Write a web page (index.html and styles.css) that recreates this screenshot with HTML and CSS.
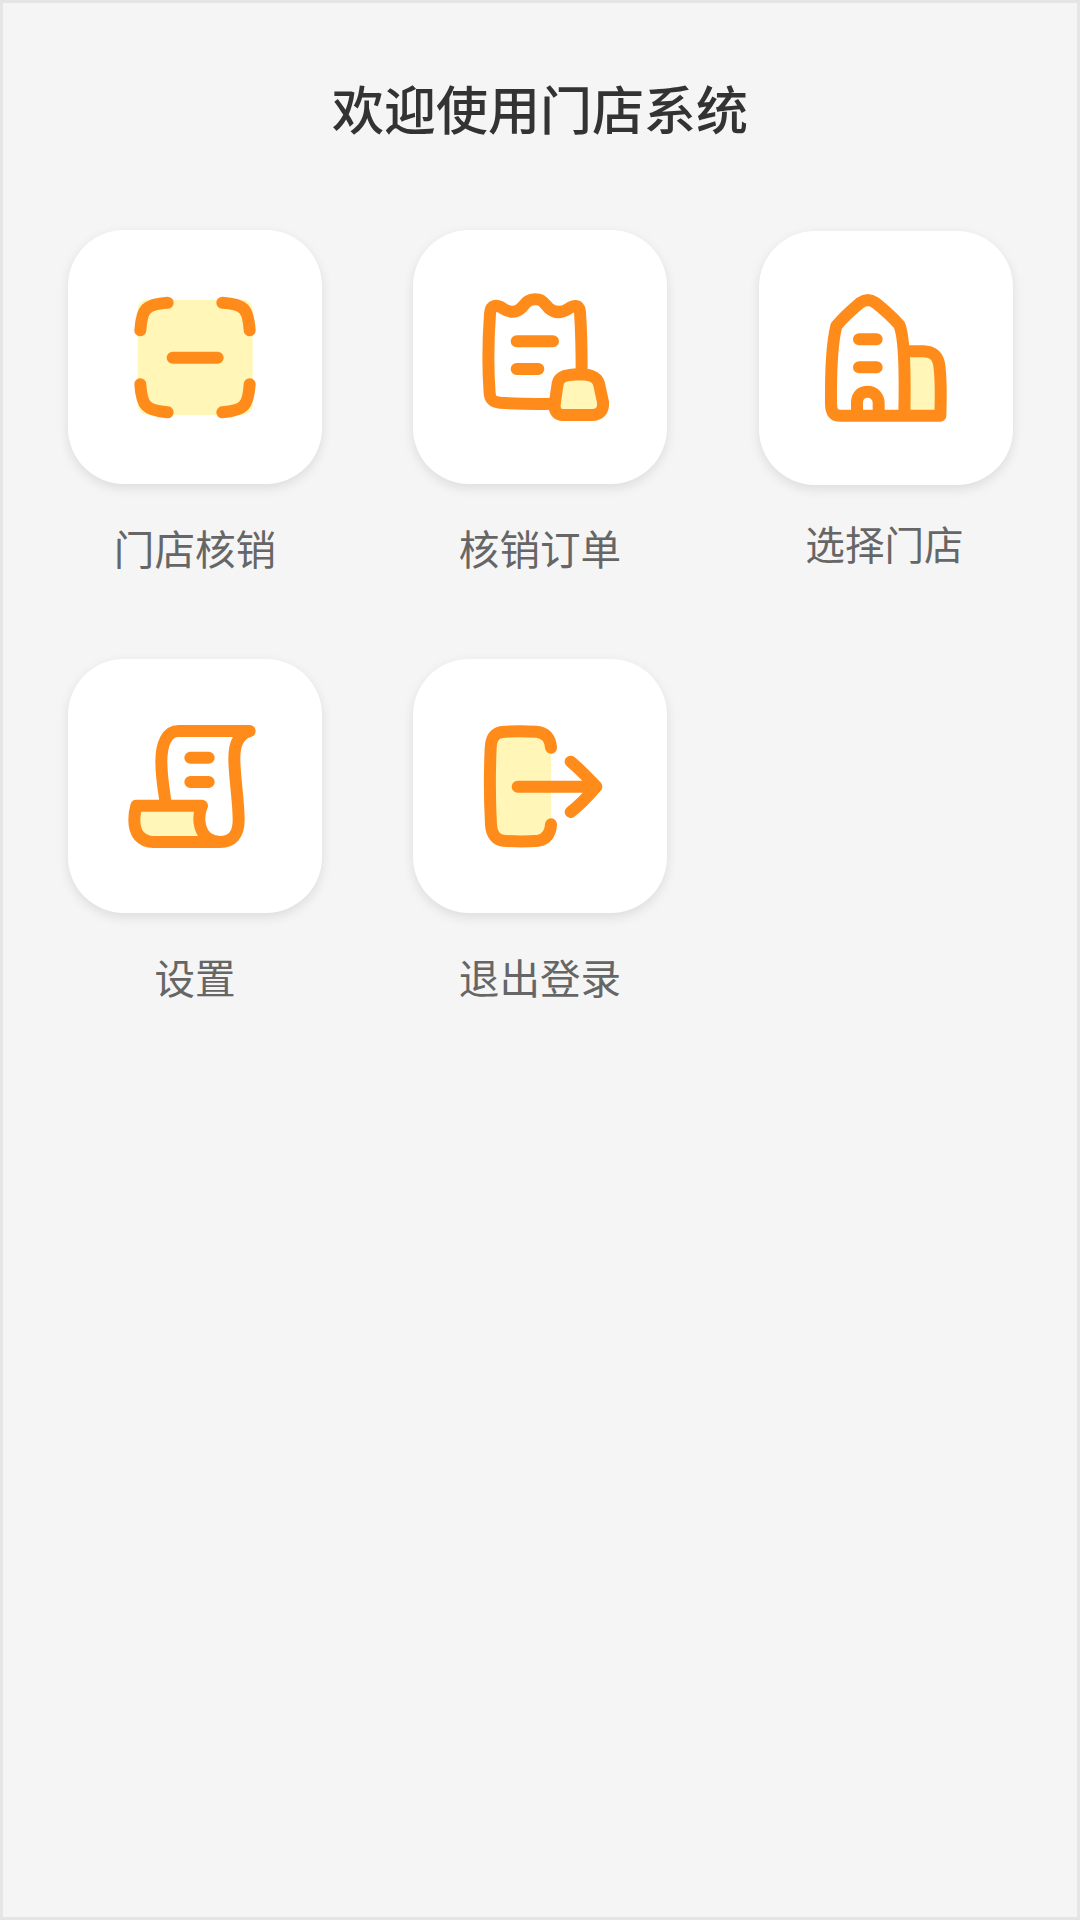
FILE: index.html
```html
<!DOCTYPE html>
<html lang="zh-CN">
<head>
    <meta charset="UTF-8">
    <meta name="viewport" content="width=device-width, initial-scale=1.0">
    <title>门店系统</title>
    <link rel="stylesheet" href="styles.css">
</head>
<body>
    <h1 class="title">欢迎使用门店系统</h1>
    <div class="menu">
        <div class="menu-item">
            <div class="icon-box">
                <svg class="icon" viewBox="164 170 480 480">
                    <rect class="fill" x="232" y="238" width="345" height="346" rx="30"/>
                    <path class="line" d="M240 330C244 266 256 251 322 247M486 247C552 251 564 266 568 330M240 492C244 556 256 571 322 576M568 492C564 556 552 571 486 576M337 412H472"/>
                </svg>
            </div>
            <p class="label">门店核销</p>
        </div>
        <div class="menu-item">
            <div class="icon-box">
                <svg class="icon" viewBox="165 170 480 480">
                    <path class="line" d="M530 455C530 390 528 320 525 275C523 250 505 255 490 265C470 278 450 280 430 262C410 240 410 237 390 237C370 237 365 245 350 262C335 278 315 278 295 265C275 252 257 252 255 280C250 350 248 440 254 520C256 540 265 545 285 547C330 550 390 552 445 550M335 363H444M335 446H400"/>
                    <path class="fill line" d="M450 545L458 490C462 470 475 465 515 462C550 462 575 465 582 490L594 545C596 570 585 584 560 584H475C455 584 445 570 450 545Z"/>
                </svg>
            </div>
            <p class="label">核销订单</p>
        </div>
        <div class="menu-item menu-item-shifted">
            <div class="icon-box">
                <svg class="icon" viewBox="167 174 480 480">
                    <path class="fill" d="M465 394H520C545 395 560 405 566 430C572 470 572 530 570 587H462Z"/>
                    <path class="line" d="M462 585C465 450 460 345 447 315C425 290 400 268 375 248C360 238 345 238 330 248C310 265 280 290 258 318C245 370 241 450 242 550C242 575 250 587 270 587H570C572 530 572 470 566 430C560 405 545 395 520 394H465M320 585V548C320 525 335 515 352 515C370 515 385 530 385 548V585M326 358H379M326 442H379"/>
                </svg>
            </div>
            <p class="label">选择门店</p>
        </div>
        <div class="menu-item">
            <div class="icon-box">
                <svg class="icon" viewBox="164 168 480 480">
                    <path class="fill" d="M228 467H425C415 490 415 510 420 530C428 560 450 576 480 576H280C240 575 222 550 222 510C222 495 224 480 228 467Z"/>
                    <path class="line" d="M317 465C310 420 303 380 303 335C303 280 320 243 355 243H568C535 252 522 280 522 325C522 380 535 450 535 510C535 555 515 575 480 576H280C240 575 222 550 222 510C222 495 224 480 228 467H425C415 490 415 510 420 530C428 560 450 576 480 576M390 323H445M390 396H445"/>
                </svg>
            </div>
            <p class="label">设置</p>
        </div>
        <div class="menu-item">
            <div class="icon-box">
                <svg class="icon" viewBox="165 168 480 480">
                    <path class="fill line" d="M438 293C436 262 420 247 395 245C360 243 320 243 290 246C268 250 258 265 257 295C254 360 254 450 258 525C260 555 275 570 295 572C330 575 370 575 400 572C425 568 437 550 438 523"/>
                    <path class="line" d="M338 410H572M497 335C525 358 550 385 574 410C550 438 525 465 497 486"/>
                </svg>
            </div>
            <p class="label">退出登录</p>
        </div>
    </div>
</body>
</html>
```

FILE: styles.css
```css
* {
    box-sizing: border-box;
}
body {
    font-family: "Noto Sans CJK SC", "Noto Sans", sans-serif;
    background-color: #f5f5f5;
    border: 3px solid #e5e5e5;
    height: 1920px;
    margin: 0;
    padding-top: 71px;
}
.title {
    color: #333;
    font-size: 52px;
    font-weight: 500;
    line-height: 68px;
    margin: 0 0 88px;
    text-align: center;
}
.menu {
    display: grid;
    grid-template-columns: 345px 346px 254px;
    row-gap: 84px;
    padding-left: 65px;
}
.menu-item {
    display: flex;
    flex-direction: column;
    align-items: center;
    width: 254px;
}
.menu-item-shifted {
    margin-top: 1px;
}
.menu-item-shifted .label {
    font-size: 39.6px;
    margin-top: 31px;
    margin-right: 3px;
}
.icon-box {
    display: flex;
    align-items: center;
    justify-content: center;
    width: 254px;
    height: 254px;
    background-color: #fff;
    border-radius: 56px;
    box-shadow: 0 4px 12px rgba(0, 0, 0, 0.1);
}
.icon {
    width: 160px;
    height: 160px;
}
.line {
    fill: none;
    stroke: #ff8c1a;
    stroke-width: 36;
    stroke-linecap: round;
    stroke-linejoin: round;
}
.fill {
    fill: #fff6b8;
}
.label {
    color: #666;
    font-size: 40.6px;
    line-height: 54px;
    margin: 37px 0 0;
}
```
